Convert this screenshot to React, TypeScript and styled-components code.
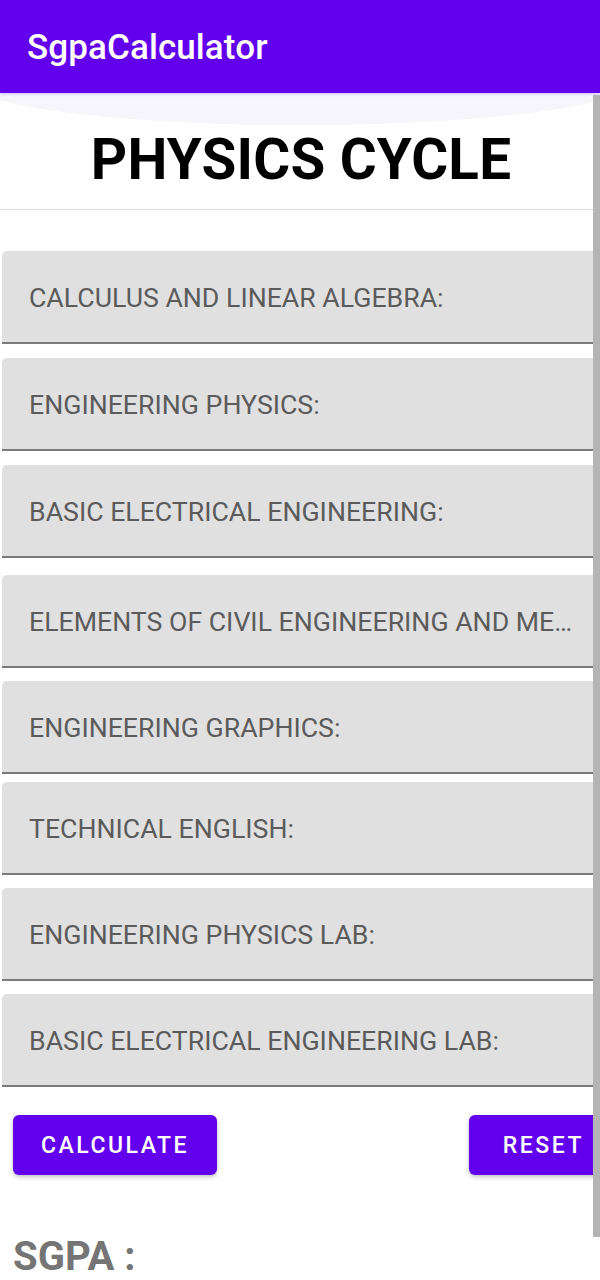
import React from "react";
import styled, { createGlobalStyle } from "styled-components";

const Global = createGlobalStyle`
  html, body {
    margin: 0;
    padding: 0;
    background: #ffffff;
    overflow: hidden;
    font-family: Roboto, "Noto Sans", "Liberation Sans", sans-serif;
  }
  * { box-sizing: border-box; }
`;

const Screen = styled.div`
  width: 600px;
  height: 1280px;
  display: flex;
  flex-direction: column;
  overflow: hidden;
`;

const AppBar = styled.header`
  height: 93px;
  flex: none;
  background: #6200ee;
  display: flex;
  align-items: center;
  padding-left: 27px;
  position: relative;
  z-index: 2;
  box-shadow: 0 1px 3px rgba(98, 0, 238, 0.25);
`;

const AppTitle = styled.h1`
  margin: 2px 0 0 0;
  font-size: 35px;
  font-weight: 500;
  color: #ffffff;
  letter-spacing: 0.1px;
`;

const Content = styled.main`
  position: relative;
  flex: 1;
  overflow: hidden;
`;

const Glow = styled.div`
  position: absolute;
  left: -30px;
  top: -54px;
  width: 660px;
  height: 86px;
  border-radius: 50%;
  background: #f6f5fb;
  pointer-events: none;
`;

const ScrollThumb = styled.div`
  position: absolute;
  right: 0;
  top: 2px;
  width: 7px;
  height: 1142px;
  background: #b4b4b4;
  z-index: 3;
`;

const Heading = styled.div`
  position: relative;
  height: 117px;
  display: flex;
  align-items: center;
  justify-content: center;
  border-bottom: 1px solid #dcdcdc;
`;

const HeadingText = styled.h2`
  margin: 18px 0 0 2px;
  font-size: 56.5px;
  font-weight: 700;
  color: #000000;
  letter-spacing: 0.2px;
`;

const FieldList = styled.div`
  display: flex;
  flex-direction: column;
  padding-top: 41px;
`;

const Field = styled.div<{ $gap: number }>`
  margin-top: ${(p) => p.$gap}px;
  margin-left: 2px;
  width: 595px;
  height: 93px;
  background: #e0e0e0;
  border-radius: 5px 5px 0 0;
  border-bottom: 2px solid #7a7a7a;
  display: flex;
  align-items: center;
  padding: 2px 20px 0 27px;
`;

const FieldLabel = styled.span`
  font-size: 26.7px;
  color: #5b5b5b;
  white-space: nowrap;
  overflow: hidden;
  letter-spacing: 0;
`;

const ButtonRow = styled.div`
  display: flex;
  align-items: center;
  justify-content: space-between;
  padding-left: 13px;
  margin-top: 28px;
`;

const ActionButton = styled.button<{ $bleed?: boolean }>`
  height: 60px;
  padding: 0 ${(p) => (p.$bleed ? "34px" : "28px")};
  margin-right: ${(p) => (p.$bleed ? "-18px" : "0")};
  border: none;
  border-radius: 6px;
  background: #6200ee;
  color: #ffffff;
  font-family: Roboto, "Noto Sans", "Liberation Sans", sans-serif;
  font-size: 23px;
  font-weight: 500;
  letter-spacing: 2.5px;
  box-shadow: 0 2px 4px rgba(0, 0, 0, 0.25);
`;

const Result = styled.div`
  margin-top: 58px;
  padding-left: 13px;
  font-size: 40px;
  font-weight: 700;
  color: #757575;
`;

const subjects: { label: string; gap: number }[] = [
  { label: "CALCULUS AND LINEAR ALGEBRA:", gap: 0 },
  { label: "ENGINEERING PHYSICS:", gap: 14 },
  { label: "BASIC ELECTRICAL ENGINEERING:", gap: 14 },
  { label: "ELEMENTS OF CIVIL ENGINEERING AND ME…", gap: 17 },
  { label: "ENGINEERING GRAPHICS:", gap: 13 },
  { label: "TECHNICAL ENGLISH:", gap: 8 },
  { label: "ENGINEERING PHYSICS LAB:", gap: 13 },
  { label: "BASIC ELECTRICAL ENGINEERING LAB:", gap: 13 },
];

export default function App() {
  return (
    <Screen>
      <Global />
      <AppBar>
        <AppTitle>SgpaCalculator</AppTitle>
      </AppBar>
      <Content>
        <Glow />
        <ScrollThumb />
        <Heading>
          <HeadingText>PHYSICS CYCLE</HeadingText>
        </Heading>
        <FieldList>
          {subjects.map((s) => (
            <Field key={s.label} $gap={s.gap}>
              <FieldLabel>{s.label}</FieldLabel>
            </Field>
          ))}
        </FieldList>
        <ButtonRow>
          <ActionButton>CALCULATE</ActionButton>
          <ActionButton $bleed>RESET</ActionButton>
        </ButtonRow>
        <Result>SGPA :</Result>
      </Content>
    </Screen>
  );
}
